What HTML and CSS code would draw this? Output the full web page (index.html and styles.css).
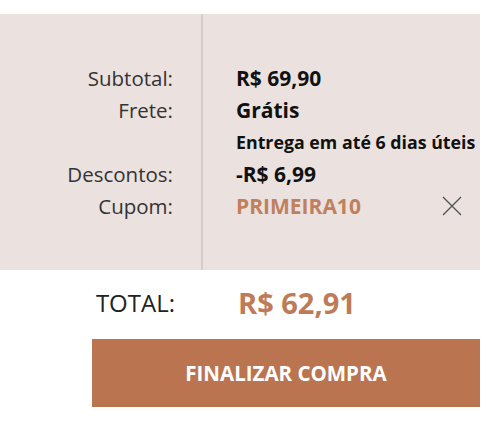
FILE: index.html
```html
<!DOCTYPE html>
<html lang="pt-BR">
<head>
<meta charset="utf-8">
<link rel="stylesheet" href="styles.css">
</head>
<body>
<div class="summary">
  <div class="labels">
    <div class="row">Subtotal:</div>
    <div class="row">Frete:</div>
    <div class="row"></div>
    <div class="row">Descontos:</div>
    <div class="row">Cupom:</div>
  </div>
  <div class="values">
    <div class="row">R$ 69,90</div>
    <div class="row">Grátis</div>
    <div class="row small">Entrega em até 6 dias úteis</div>
    <div class="row">-R$ 6,99</div>
    <div class="row coupon">
      <span class="code">PRIMEIRA10</span>
      <svg class="close" width="20" height="20" viewBox="0 0 20 20"><path d="M1 1 L19 19 M19 1 L1 19" stroke="#555" stroke-width="1.4" fill="none"/></svg>
    </div>
  </div>
</div>
<div class="total">
  <div class="total-label">TOTAL:</div>
  <div class="total-value">R$ 62,91</div>
</div>
<div class="actions">
  <button class="checkout">FINALIZAR COMPRA</button>
</div>
</body>
</html>
```
FILE: styles.css
```css
html, body {
  margin: 0;
  padding: 0;
  background: #fff;
  font-family: "Open Sans", "Liberation Sans", sans-serif;
}
.summary {
  margin-top: 14px;
  width: 480px;
  height: 256px;
  background: #ebe2df;
  display: grid;
  grid-template-columns: 203px 1fr;
  box-sizing: border-box;
}
.labels {
  border-right: 2px solid #d6ccc8;
  padding-top: 48px;
  padding-right: 28px;
  text-align: right;
  color: #333;
}
.labels .row {
  font-size: 20.5px;
}
.values {
  padding-top: 48px;
  padding-left: 33px;
  color: #111;
  font-weight: 700;
}
.row {
  height: 32px;
  line-height: 32px;
  font-size: 21px;
  white-space: nowrap;
}
.values .small {
  font-size: 17.8px;
}
.coupon {
  display: flex;
  align-items: center;
  justify-content: space-between;
  padding-right: 18px;
}
.code {
  color: #c0805e;
}
.total {
  display: grid;
  grid-template-columns: 203px 1fr;
  margin-top: 15px;
  height: 36px;
  line-height: 36px;
}
.total-label {
  text-align: right;
  padding-right: 28px;
  font-size: 24px;
  color: #222;
}
.total-value {
  padding-left: 35px;
  font-size: 29px;
  font-weight: 700;
  color: #be7b58;
}
.actions {
  padding-left: 92px;
  margin-top: 18px;
}
.checkout {
  display: block;
  width: 388px;
  height: 68px;
  border: 0;
  background: #bb7450;
  color: #fff;
  font-family: "Open Sans", "Liberation Sans", sans-serif;
  font-weight: 700;
  font-size: 20.5px;
  padding: 0;
}
```
